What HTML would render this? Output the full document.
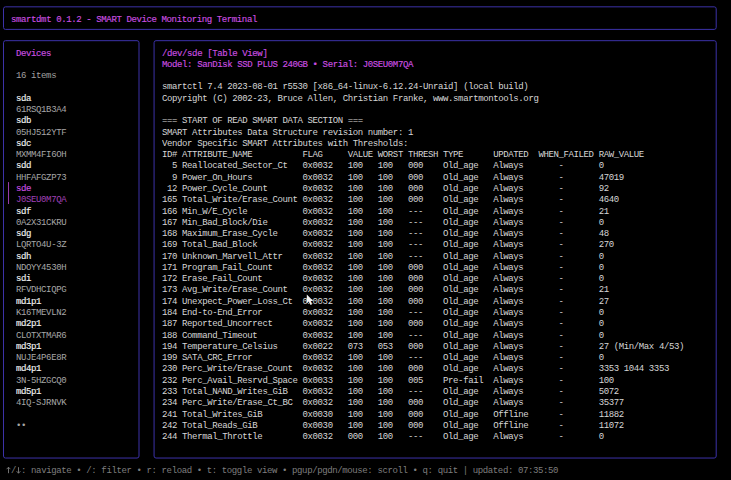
<!DOCTYPE html><html><head><meta charset="utf-8"><style>
html,body{margin:0;padding:0;background:#000;width:731px;height:480px;overflow:hidden;}
body{position:relative;font-family:"Liberation Mono",monospace;font-size:9.500px;line-height:11.280px;letter-spacing:-0.4178px;}
.l{position:absolute;white-space:pre;transform:scale(0.950,1.000);transform-origin:0 8.17px;}
.b{-webkit-text-stroke:0.15px currentColor;}
svg{position:absolute;left:0;top:0;}
</style></head><body>
<svg width="731" height="480" viewBox="0 0 731 480"><rect x="3.50" y="6.84" width="712.70" height="22.56" rx="2.0" ry="2.0" fill="none" stroke="#3c32a8" stroke-width="1.0"/><rect x="3.50" y="40.68" width="135.51" height="417.36" rx="2.0" ry="2.0" fill="none" stroke="#3c32a8" stroke-width="1.0"/><rect x="154.07" y="40.68" width="562.13" height="417.36" rx="2.0" ry="2.0" fill="none" stroke="#3c32a8" stroke-width="1.0"/><line x1="8.52" y1="182.08" x2="8.52" y2="204.04" stroke="#9a3cac" stroke-width="1"/><path d="M8.5 467.2 V473.2 M6.6 469.2 L8.5 467.2 L10.4 469.2 M18.5 467.2 V473.2 M16.6 471.2 L18.5 473.2 L20.4 471.2" fill="none" stroke="#7e7e7e" stroke-width="0.9"/></svg>
<div class="l b" style="left:11.03px;top:13.75px;color:#cc4fe0">smartdmt 0.1.2 - SMART Device Monitoring Terminal</div>
<div class="l b" style="left:16.05px;top:47.59px;color:#cc4fe0">Devices</div>
<div class="l" style="left:16.05px;top:70.15px;color:#a0a0a0">16 items</div>
<div class="l b" style="left:16.05px;top:92.71px;color:#f2f2f2">sda</div>
<div class="l" style="left:16.05px;top:103.99px;color:#a6a6a6">61RSQ1B3A4</div>
<div class="l b" style="left:16.05px;top:115.27px;color:#f2f2f2">sdb</div>
<div class="l" style="left:16.05px;top:126.55px;color:#a6a6a6">05HJ512YTF</div>
<div class="l b" style="left:16.05px;top:137.83px;color:#f2f2f2">sdc</div>
<div class="l" style="left:16.05px;top:149.11px;color:#a6a6a6">MXMM4FI6OH</div>
<div class="l b" style="left:16.05px;top:160.39px;color:#f2f2f2">sdd</div>
<div class="l" style="left:16.05px;top:171.67px;color:#a6a6a6">HHFAFGZP73</div>
<div class="l b" style="left:16.05px;top:182.95px;color:#cc4fe0">sde</div>
<div class="l" style="left:16.05px;top:194.23px;color:#a040b8">J0SEU0M7QA</div>
<div class="l b" style="left:16.05px;top:205.51px;color:#f2f2f2">sdf</div>
<div class="l" style="left:16.05px;top:216.79px;color:#a6a6a6">0A2X31CKRU</div>
<div class="l b" style="left:16.05px;top:228.07px;color:#f2f2f2">sdg</div>
<div class="l" style="left:16.05px;top:239.35px;color:#a6a6a6">LQRTO4U-3Z</div>
<div class="l b" style="left:16.05px;top:250.63px;color:#f2f2f2">sdh</div>
<div class="l" style="left:16.05px;top:261.91px;color:#a6a6a6">NDOYY4530H</div>
<div class="l b" style="left:16.05px;top:273.19px;color:#f2f2f2">sdi</div>
<div class="l" style="left:16.05px;top:284.47px;color:#a6a6a6">RFVDHCIQPG</div>
<div class="l b" style="left:16.05px;top:295.75px;color:#f2f2f2">md1p1</div>
<div class="l" style="left:16.05px;top:307.03px;color:#a6a6a6">K16TMEVLN2</div>
<div class="l b" style="left:16.05px;top:318.31px;color:#f2f2f2">md2p1</div>
<div class="l" style="left:16.05px;top:329.59px;color:#a6a6a6">CLOTXTMAR6</div>
<div class="l b" style="left:16.05px;top:340.87px;color:#f2f2f2">md3p1</div>
<div class="l" style="left:16.05px;top:352.15px;color:#a6a6a6">NUJE4P6E8R</div>
<div class="l b" style="left:16.05px;top:363.43px;color:#f2f2f2">md4p1</div>
<div class="l" style="left:16.05px;top:374.71px;color:#a6a6a6">3N-5HZGCQ0</div>
<div class="l b" style="left:16.05px;top:385.99px;color:#f2f2f2">md5p1</div>
<div class="l" style="left:16.05px;top:397.27px;color:#a6a6a6">4IQ-SJRNVK</div>
<div class="l" style="left:16.05px;top:419.83px;color:#a6a6a6">••</div>
<div class="l b" style="left:161.60px;top:47.59px;color:#cc4fe0">/dev/sde [Table View]</div>
<div class="l b" style="left:161.60px;top:58.87px;color:#cc4fe0">Model: SanDisk SSD PLUS 240GB • Serial: J0SEU0M7QA</div>
<div class="l" style="left:161.60px;top:81.43px;color:#d6d6d6">smartctl 7.4 2023-08-01 r5530 [x86_64-linux-6.12.24-Unraid] (local build)</div>
<div class="l" style="left:161.60px;top:92.71px;color:#d6d6d6">Copyright (C) 2002-23, Bruce Allen, Christian Franke, www.smartmontools.org</div>
<div class="l" style="left:161.60px;top:115.27px;color:#d6d6d6">=== START OF READ SMART DATA SECTION ===</div>
<div class="l" style="left:161.60px;top:126.55px;color:#d6d6d6">SMART Attributes Data Structure revision number: 1</div>
<div class="l" style="left:161.60px;top:137.83px;color:#d6d6d6">Vendor Specific SMART Attributes with Thresholds:</div>
<div class="l" style="left:161.60px;top:149.11px;color:#d6d6d6">ID# ATTRIBUTE_NAME          FLAG     VALUE WORST THRESH TYPE      UPDATED  WHEN_FAILED RAW_VALUE</div>
<div class="l" style="left:161.60px;top:160.39px;color:#d6d6d6">  5 Reallocated_Sector_Ct   0x0032   100   100   000    Old_age   Always       -       0</div>
<div class="l" style="left:161.60px;top:171.67px;color:#d6d6d6">  9 Power_On_Hours          0x0032   100   100   000    Old_age   Always       -       47019</div>
<div class="l" style="left:161.60px;top:182.95px;color:#d6d6d6"> 12 Power_Cycle_Count       0x0032   100   100   000    Old_age   Always       -       92</div>
<div class="l" style="left:161.60px;top:194.23px;color:#d6d6d6">165 Total_Write/Erase_Count 0x0032   100   100   000    Old_age   Always       -       4640</div>
<div class="l" style="left:161.60px;top:205.51px;color:#d6d6d6">166 Min_W/E_Cycle           0x0032   100   100   ---    Old_age   Always       -       21</div>
<div class="l" style="left:161.60px;top:216.79px;color:#d6d6d6">167 Min_Bad_Block/Die       0x0032   100   100   ---    Old_age   Always       -       0</div>
<div class="l" style="left:161.60px;top:228.07px;color:#d6d6d6">168 Maximum_Erase_Cycle     0x0032   100   100   ---    Old_age   Always       -       48</div>
<div class="l" style="left:161.60px;top:239.35px;color:#d6d6d6">169 Total_Bad_Block         0x0032   100   100   ---    Old_age   Always       -       270</div>
<div class="l" style="left:161.60px;top:250.63px;color:#d6d6d6">170 Unknown_Marvell_Attr    0x0032   100   100   ---    Old_age   Always       -       0</div>
<div class="l" style="left:161.60px;top:261.91px;color:#d6d6d6">171 Program_Fail_Count      0x0032   100   100   000    Old_age   Always       -       0</div>
<div class="l" style="left:161.60px;top:273.19px;color:#d6d6d6">172 Erase_Fail_Count        0x0032   100   100   000    Old_age   Always       -       0</div>
<div class="l" style="left:161.60px;top:284.47px;color:#d6d6d6">173 Avg_Write/Erase_Count   0x0032   100   100   000    Old_age   Always       -       21</div>
<div class="l" style="left:161.60px;top:295.75px;color:#d6d6d6">174 Unexpect_Power_Loss_Ct  0x0032   100   100   000    Old_age   Always       -       27</div>
<div class="l" style="left:161.60px;top:307.03px;color:#d6d6d6">184 End-to-End_Error        0x0032   100   100   ---    Old_age   Always       -       0</div>
<div class="l" style="left:161.60px;top:318.31px;color:#d6d6d6">187 Reported_Uncorrect      0x0032   100   100   000    Old_age   Always       -       0</div>
<div class="l" style="left:161.60px;top:329.59px;color:#d6d6d6">188 Command_Timeout         0x0032   100   100   ---    Old_age   Always       -       0</div>
<div class="l" style="left:161.60px;top:340.87px;color:#d6d6d6">194 Temperature_Celsius     0x0022   073   053   000    Old_age   Always       -       27 (Min/Max 4/53)</div>
<div class="l" style="left:161.60px;top:352.15px;color:#d6d6d6">199 SATA_CRC_Error          0x0032   100   100   ---    Old_age   Always       -       0</div>
<div class="l" style="left:161.60px;top:363.43px;color:#d6d6d6">230 Perc_Write/Erase_Count  0x0032   100   100   000    Old_age   Always       -       3353 1044 3353</div>
<div class="l" style="left:161.60px;top:374.71px;color:#d6d6d6">232 Perc_Avail_Resrvd_Space 0x0033   100   100   005    Pre-fail  Always       -       100</div>
<div class="l" style="left:161.60px;top:385.99px;color:#d6d6d6">233 Total_NAND_Writes_GiB   0x0032   100   100   ---    Old_age   Always       -       5072</div>
<div class="l" style="left:161.60px;top:397.27px;color:#d6d6d6">234 Perc_Write/Erase_Ct_BC  0x0032   100   100   000    Old_age   Always       -       35377</div>
<div class="l" style="left:161.60px;top:408.55px;color:#d6d6d6">241 Total_Writes_GiB        0x0030   100   100   000    Old_age   Offline      -       11882</div>
<div class="l" style="left:161.60px;top:419.83px;color:#d6d6d6">242 Total_Reads_GiB         0x0030   100   100   000    Old_age   Offline      -       11072</div>
<div class="l" style="left:161.60px;top:431.11px;color:#d6d6d6">244 Thermal_Throttle        0x0032   000   100   ---    Old_age   Always       -       0</div>
<div class="l" style="left:6.01px;top:464.95px;color:#7e7e7e"> / : navigate • /: filter • r: reload • t: toggle view • pgup/pgdn/mouse: scroll • q: quit | updated: 07:35:50</div>
<svg width="731" height="480" viewBox="0 0 731 480"><path d="M306.8 294.6 L306.8 303.2 L308.9 301.4 L310.5 305 L312 304.3 L310.5 300.9 L313.2 300.9 Z" fill="#f2f2f2"/></svg>
</body></html>
